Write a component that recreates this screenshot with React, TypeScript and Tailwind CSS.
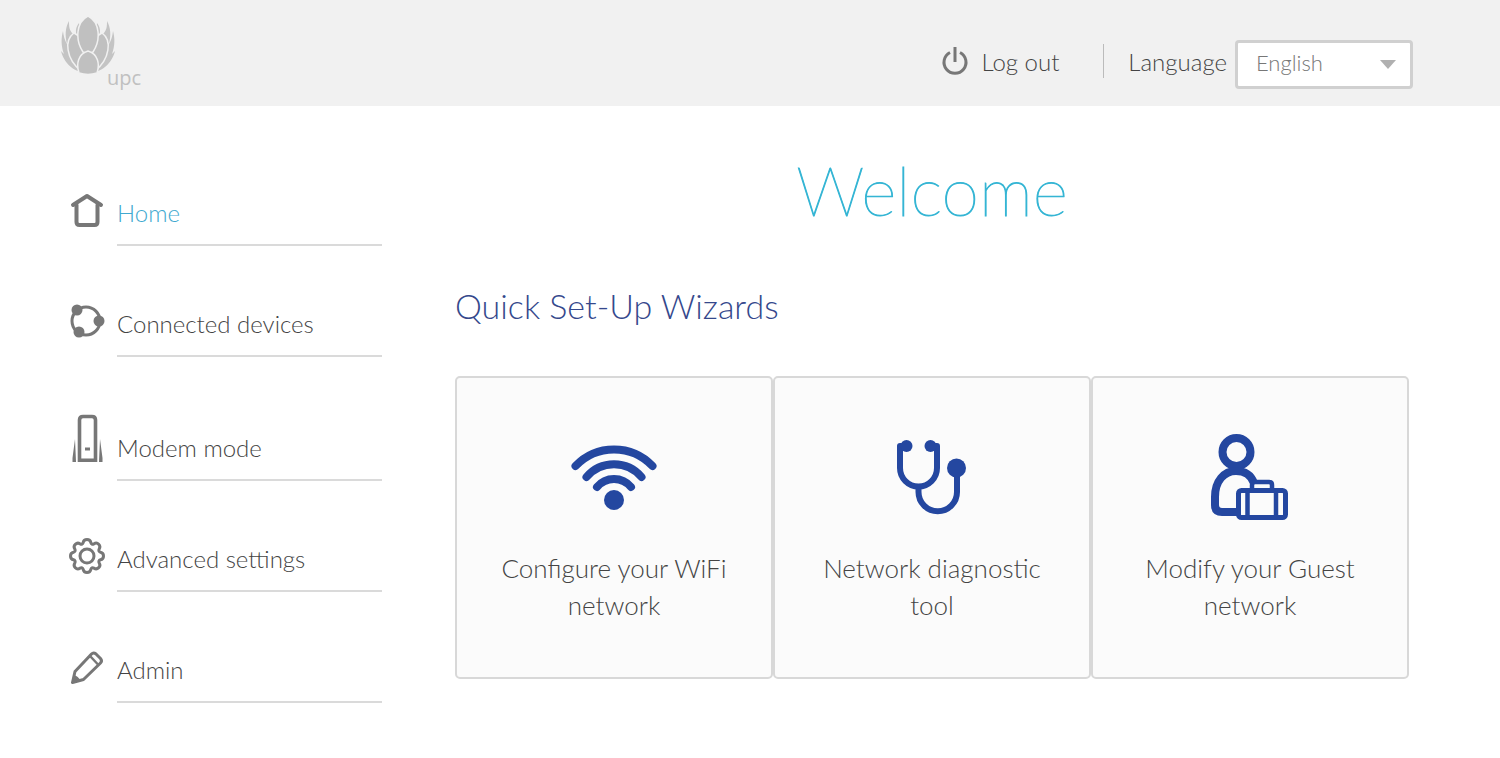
import React from "react";

interface MenuItem {
  label: string;
  icon: React.ReactNode;
  active?: boolean;
}

interface WizardCardProps {
  label: string;
  icon: React.ReactNode;
}

const HomeIcon = () => (
  <svg width="36" height="36" viewBox="0 0 36 36" fill="none" stroke="#777" strokeWidth="4" strokeLinecap="round" strokeLinejoin="round">
    <path d="M4 13L18 4l14 9" />
    <path d="M7.500 13v17q0 3 3 3h15q3 0 3-3V13" />
  </svg>
);

const DevicesIcon = () => (
  <svg width="36" height="36" viewBox="0 0 36 36" fill="none" stroke="#777" strokeWidth="3">
    <circle cx="17" cy="18" r="14" />
    <g fill="#777" stroke="none">
      <circle cx="8" cy="7" r="5.500" />
      <circle cx="30" cy="18" r="5.500" />
      <circle cx="10" cy="29" r="5.500" />
    </g>
  </svg>
);

const ModemIcon = () => (
  <svg width="36" height="49" viewBox="0 0 36 49" fill="none" stroke="#777" strokeWidth="3.600">
    <path d="M10.500 46.200V6q0-3.500 3.500-3.500h9q3.500 0 3.500 3.500v40.200z" />
    <path d="M16 35h5" strokeWidth="3" />
    <path d="M6 25L3.500 44v4H7zM31 25l2.500 19v4H30z" fill="#777" stroke="none" />
  </svg>
);

const GearIcon = () => (
  <svg width="36" height="36" viewBox="1 1 36 36" fill="none" stroke="#777" strokeWidth="3" strokeLinejoin="round">
    <circle cx="19" cy="19" r="7" />
    <path d="M15.200 5.500Q15.800 2.500 19 2.500T22.800 5.500Q23.500 8 26 6.800Q28.600 5.100 30.700 7.300T31.200 12Q30 14.500 32.500 15.200Q35.500 15.800 35.500 19T32.500 22.800Q30 23.500 31.200 26Q32.900 28.600 30.700 30.700T26 31.200Q23.500 30 22.800 32.500Q22.200 35.500 19 35.500T15.200 32.500Q14.500 30 12 31.200Q9.400 32.900 7.300 30.700T6.800 26Q8 23.500 5.500 22.800Q2.500 22.200 2.500 19T5.500 15.200Q8 14.500 6.800 12Q5.100 9.400 7.300 7.300T12 6.800Q14.500 8 15.200 5.500z" />
  </svg>
);

const PencilIcon = () => (
  <svg width="36" height="36" viewBox="0 0 36 36" fill="none" stroke="#777" strokeWidth="3" strokeLinejoin="round">
    <path d="M3.500 33.500L6 22.500 22.500 5q2-2 4.500 0l4.500 4.500q2 2.500 0 4.500L14.500 30.500z" />
    <path d="M21.500 7.500l7.500 8" strokeWidth="2.500" />
    <path d="M3 34l1.500-8q5 1 7 6z" fill="#777" stroke="none" />
  </svg>
);

const PowerIcon = () => (
  <svg width="28" height="30" viewBox="0 0 28 30" fill="none" stroke="#777" strokeWidth="3">
    <path d="M9 5.500A11 11 0 1 0 19 5.500" />
    <path d="M14 0v15" />
  </svg>
);

const WifiIcon = () => (
  <svg width="90" height="90" viewBox="18 7 90 90" fill="none" stroke="#2447a0" strokeWidth="8" strokeLinecap="round">
    <path d="M24.500 41A53 53 0 0 1 101.500 41" />
    <path d="M35.500 52A36 36 0 0 1 90.500 52" />
    <path d="M46 62A22 22 0 0 1 80 62" />
    <circle cx="63" cy="75" r="10" fill="#2447a0" stroke="none" />
  </svg>
);

const StethoscopeIcon = () => (
  <svg width="90" height="90" viewBox="17 7 90 90" fill="none" stroke="#2447a0" strokeWidth="6">
    <path d="M36 21H30V43A18.500 18.500 0 0 0 67 43V21H61" strokeLinejoin="round" />
    <path d="M48.500 61v6a19 19 0 0 0 38.500 0V43" />
    <g fill="#2447a0" stroke="none">
      <circle cx="36.500" cy="21" r="6" />
      <circle cx="60.500" cy="21" r="6" />
      <circle cx="86.500" cy="43" r="9.500" />
    </g>
  </svg>
);

const GuestIcon = () => (
  <svg width="90" height="90" viewBox="15 7 90 90" fill="none" stroke="#2447a0" strokeWidth="8">
    <circle cx="46.500" cy="27" r="14" />
    <path d="M50 87H32q-7 0-7-7v-8C25 56 34 46 46 46c9 0 15 4 18 12" />
    <rect x="48.500" y="65.500" width="47" height="27" rx="3" fill="#fbfbfb" strokeWidth="5" />
    <path d="M57.500 66v26M86 66v26M62 65v-5q0-3 3-3h14q3 0 3 3v5" strokeWidth="4.500" />
  </svg>
);

const Logo = () => (
  <a href="#" aria-label="upc home" className="flex items-end text-[#c0c0c0]">
    <svg width="54" height="60" viewBox="0 0 54 60" className="mb-3">
      <g fill="#c4c4c4">
        <path d="M8 5C4 12 4 20 6 28l6-10C8 14 8 10 8 5zM46 5c4 7 4 15 2 23l-6-10c4-4 4-8 4-13z" />
        <path d="M2 15C0 22 0 30 3 38L0 35C3 47 13 57 27 57S51 47 54 35l-3 3c3-8 3-16 1-23-1 10-5 15-9 20H11C7 30 3 25 2 15z" />
        <path d="M18 7c-3 4-4 8-2 13l4 4zM36 7c3 4 4 8 2 13l-4 4z" />
      </g>
      <g fill="#c0c0c0" stroke="#f1f1f1" strokeWidth="1.500">
        <path d="M13 17C3 24 5 43 20 55c8-8 8-31-7-38z" />
        <path d="M41 17c10 7 8 26-7 38-8-8-8-31 7-38z" />
        <path d="M27 0C15 6 14 24 22 36q5 3 10 0C40 24 39 6 27 0z" />
        <path d="M27 35C17 38 15 48 18 57q9 3 18 0c3-9 1-19-9-22z" />
      </g>
    </svg>
    <span className="-ml-2 font-['Open_Sans',sans-serif] text-xl leading-5 font-medium">upc</span>
  </a>
);

const menu: MenuItem[] = [
  { label: "Home", icon: <HomeIcon />, active: true },
  { label: "Connected devices", icon: <DevicesIcon /> },
  { label: "Modem mode", icon: <ModemIcon /> },
  { label: "Advanced settings", icon: <GearIcon /> },
  { label: "Admin", icon: <PencilIcon /> },
];

const WizardCard: React.FC<WizardCardProps> = ({ label, icon }) => (
  <button
    type="button"
    className="flex flex-1 flex-col items-center rounded-[5px] border-2 border-[#d8d8d8] bg-[#fbfbfb] px-9 pt-[54px] pb-[53px] text-[26px] leading-[37px] text-[#444]"
  >
    {icon}
    <span className="mt-7">{label}</span>
  </button>
);

export default function App() {
  return (
    <div className="min-h-screen bg-white font-['Lato',sans-serif] font-light text-[#444]">
      <header className="flex h-[106px] items-start justify-between bg-[#f1f1f1] pr-[87px] pl-[61px]">
        <div className="pt-4">
          <Logo />
        </div>
        <div className="flex items-start pt-10 text-2xl leading-11">
          <button type="button" className="flex items-center gap-3">
            <PowerIcon />
            Log out
          </button>
          <div className="mt-1 mr-6 ml-11 h-[34px] w-px bg-[#bbb]" />
          <label htmlFor="language">Language</label>
          <div className="relative ml-2">
            <select
              id="language"
              className="block h-[49px] w-[178px] appearance-none rounded border-3 border-[#d0d0d0] bg-white pr-10 pb-1 pl-[18px] text-[22px] leading-7 text-[#777]"
            >
              <option>English</option>
            </select>
            <svg width="16" height="9" viewBox="0 0 16 9" className="pointer-events-none absolute top-5 right-[17px]">
              <path d="M0 0h16L8 9z" fill="#b0b0b0" />
            </svg>
          </div>
        </div>
      </header>

      <div className="flex items-start gap-[73px] pr-[91px] pl-[69px]">
        <nav className="w-[313px] shrink-0 pt-[86px]">
          <ul className="flex flex-col gap-[57px]">
            {menu.map((item) => (
              <li key={item.label}>
                <a href="#" className="flex items-end gap-3">
                  <span className="flex w-9 justify-center pb-[18px]">{item.icon}</span>
                  <span
                    className={
                      item.active
                        ? "flex-1 border-b-2 border-[#dadada] pb-[15px] text-2xl leading-8 text-[#41a9d0]"
                        : "flex-1 border-b-2 border-[#dadada] pb-[15px] text-2xl leading-8"
                    }
                  >
                    {item.label}
                  </span>
                </a>
              </li>
            ))}
          </ul>
        </nav>

        <main className="flex-1 pt-10">
          <h1 className="text-center text-[68px] leading-[88px] font-thin text-[#35b5d4] [-webkit-text-stroke:1px_#35b5d4]">
            Welcome
          </h1>
          <h2 className="mt-12 text-[34px] leading-12 text-[#35488c]">Quick Set-Up Wizards</h2>
          <div className="mt-[46px] flex">
            <WizardCard label="Configure your WiFi network" icon={<WifiIcon />} />
            <WizardCard label="Network diagnostic tool" icon={<StethoscopeIcon />} />
            <WizardCard label="Modify your Guest network" icon={<GuestIcon />} />
          </div>
        </main>
      </div>
    </div>
  );
}
